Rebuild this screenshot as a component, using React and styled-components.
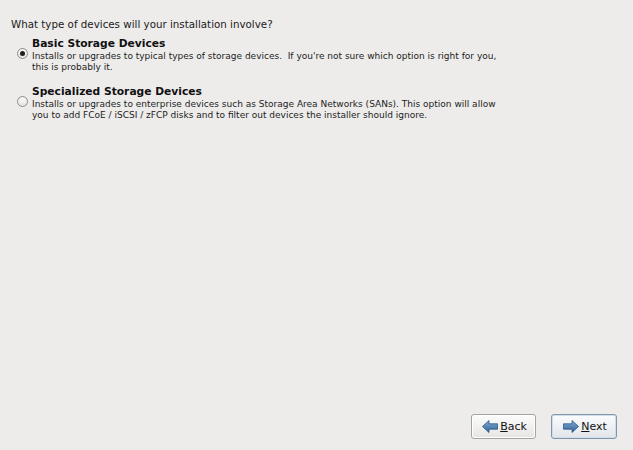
import React, { useState } from "react";
import styled, { createGlobalStyle } from "styled-components";

const GlobalStyle = createGlobalStyle`
  html, body {
    margin: 0;
    padding: 0;
    background: #edeceb;
  }
  body {
    font-family: "DejaVu Sans", "Liberation Sans", sans-serif;
    color: #000;
  }
`;

const Page = styled.div`
  width: 633px;
  height: 450px;
  box-sizing: border-box;
  display: flex;
  flex-direction: column;
  padding: 18px 0 0 11px;
`;

const Question = styled.div`
  font-size: 10.3px;
  line-height: 13px;
  color: #1a1a1a;
`;

const Options = styled.div`
  display: flex;
  flex-direction: column;
  gap: 11px;
  margin-top: 5px;
`;

const Option = styled.label`
  display: flex;
  align-items: flex-start;
  cursor: default;
`;

const RadioCell = styled.div`
  width: 21px;
  display: flex;
  padding-top: 12px;
`;

const Radio = styled.span`
  position: relative;
  width: 9px;
  height: 9px;
  border-radius: 50%;
  border: 1px solid #8f8d8b;
  background: linear-gradient(#fdfdfd, #e4e3e2);
  margin-left: 6px;
  box-shadow: inset 0 1px 1px rgba(0, 0, 0, 0.06);

  &::after {
    content: "";
    display: ${(p) => (p.$checked ? "block" : "none")};
    position: absolute;
    left: 2px;
    top: 2px;
    width: 5px;
    height: 5px;
    border-radius: 50%;
    background: #1e1e1e;
  }
`;

const OptionText = styled.div`
  display: flex;
  flex-direction: column;
`;

const OptionTitle = styled.div`
  font-size: 10.7px;
  font-weight: bold;
  line-height: 15px;
  color: #111;
`;

const OptionDesc = styled.div`
  font-size: 9px;
  line-height: 11px;
  color: #1c1c1c;
  width: 480px;
  white-space: pre-wrap;
`;

const Spacer = styled.div`
  flex: 1;
`;

const ButtonBar = styled.div`
  display: flex;
  justify-content: flex-end;
  gap: 15px;
  padding: 0 16px 11px 0;
`;

const Button = styled.button`
  display: flex;
  align-items: center;
  justify-content: center;
  gap: 2px;
  width: ${(p) => p.$w}px;
  height: 25px;
  padding: 0 0 0 2px;
  border-radius: 3px;
  border: 1px solid ${(p) => (p.$default ? "#7f97ad" : "#a5a3a0")};
  background: ${(p) =>
    p.$default
      ? "linear-gradient(#fbfcfd, #eceef1 60%, #e2e5e9)"
      : "linear-gradient(#fcfcfc, #efeeed 60%, #e6e5e3)"};
  box-shadow: ${(p) =>
    p.$default ? "inset 0 0 0 1px #d3dde7" : "inset 0 0 0 1px #ffffff"};
  font-family: "DejaVu Sans", sans-serif;
  font-size: 11px;
  color: #111;
  cursor: default;

  u {
    text-decoration: underline;
    text-underline-offset: 1px;
  }
`;

const ArrowIcon = ({ dir }) => (
  <svg width="16" height="13" viewBox="0 0 16 13">
    <defs>
      <linearGradient id={`ag-${dir}`} x1="0" y1="0" x2="0" y2="1">
        <stop offset="0" stopColor="#86aed6" />
        <stop offset="1" stopColor="#2e5f96" />
      </linearGradient>
    </defs>
    <path
      d={
        dir === "left"
          ? "M0.5 6.5 L7 0.5 L7 3.8 L15.5 3.8 L15.5 9.2 L7 9.2 L7 12.5 Z"
          : "M15.5 6.5 L9 0.5 L9 3.8 L0.5 3.8 L0.5 9.2 L9 9.2 L9 12.5 Z"
      }
      fill={`url(#ag-${dir})`}
      stroke="#2a5789"
      strokeWidth="0.8"
      strokeLinejoin="round"
    />
  </svg>
);

const options = [
  {
    id: "basic",
    title: "Basic Storage Devices",
    desc: "Installs or upgrades to typical types of storage devices.  If you're not sure which option is right for you,\nthis is probably it.",
  },
  {
    id: "special",
    title: "Specialized Storage Devices",
    desc: "Installs or upgrades to enterprise devices such as Storage Area Networks (SANs). This option will allow\nyou to add FCoE / iSCSI / zFCP disks and to filter out devices the installer should ignore.",
  },
];

export default function App() {
  const [selected, setSelected] = useState("basic");

  return (
    <>
      <GlobalStyle />
      <Page>
        <Question>What type of devices will your installation involve?</Question>
        <Options>
          {options.map((o) => (
            <Option key={o.id} onClick={() => setSelected(o.id)}>
              <RadioCell>
                <Radio $checked={selected === o.id} />
              </RadioCell>
              <OptionText>
                <OptionTitle>{o.title}</OptionTitle>
                <OptionDesc>{o.desc}</OptionDesc>
              </OptionText>
            </Option>
          ))}
        </Options>
        <Spacer />
        <ButtonBar>
          <Button $w={65}>
            <ArrowIcon dir="left" />
            <span>
              <u>B</u>ack
            </span>
          </Button>
          <Button $w={66} $default>
            <ArrowIcon dir="right" />
            <span>
              <u>N</u>ext
            </span>
          </Button>
        </ButtonBar>
      </Page>
    </>
  );
}
